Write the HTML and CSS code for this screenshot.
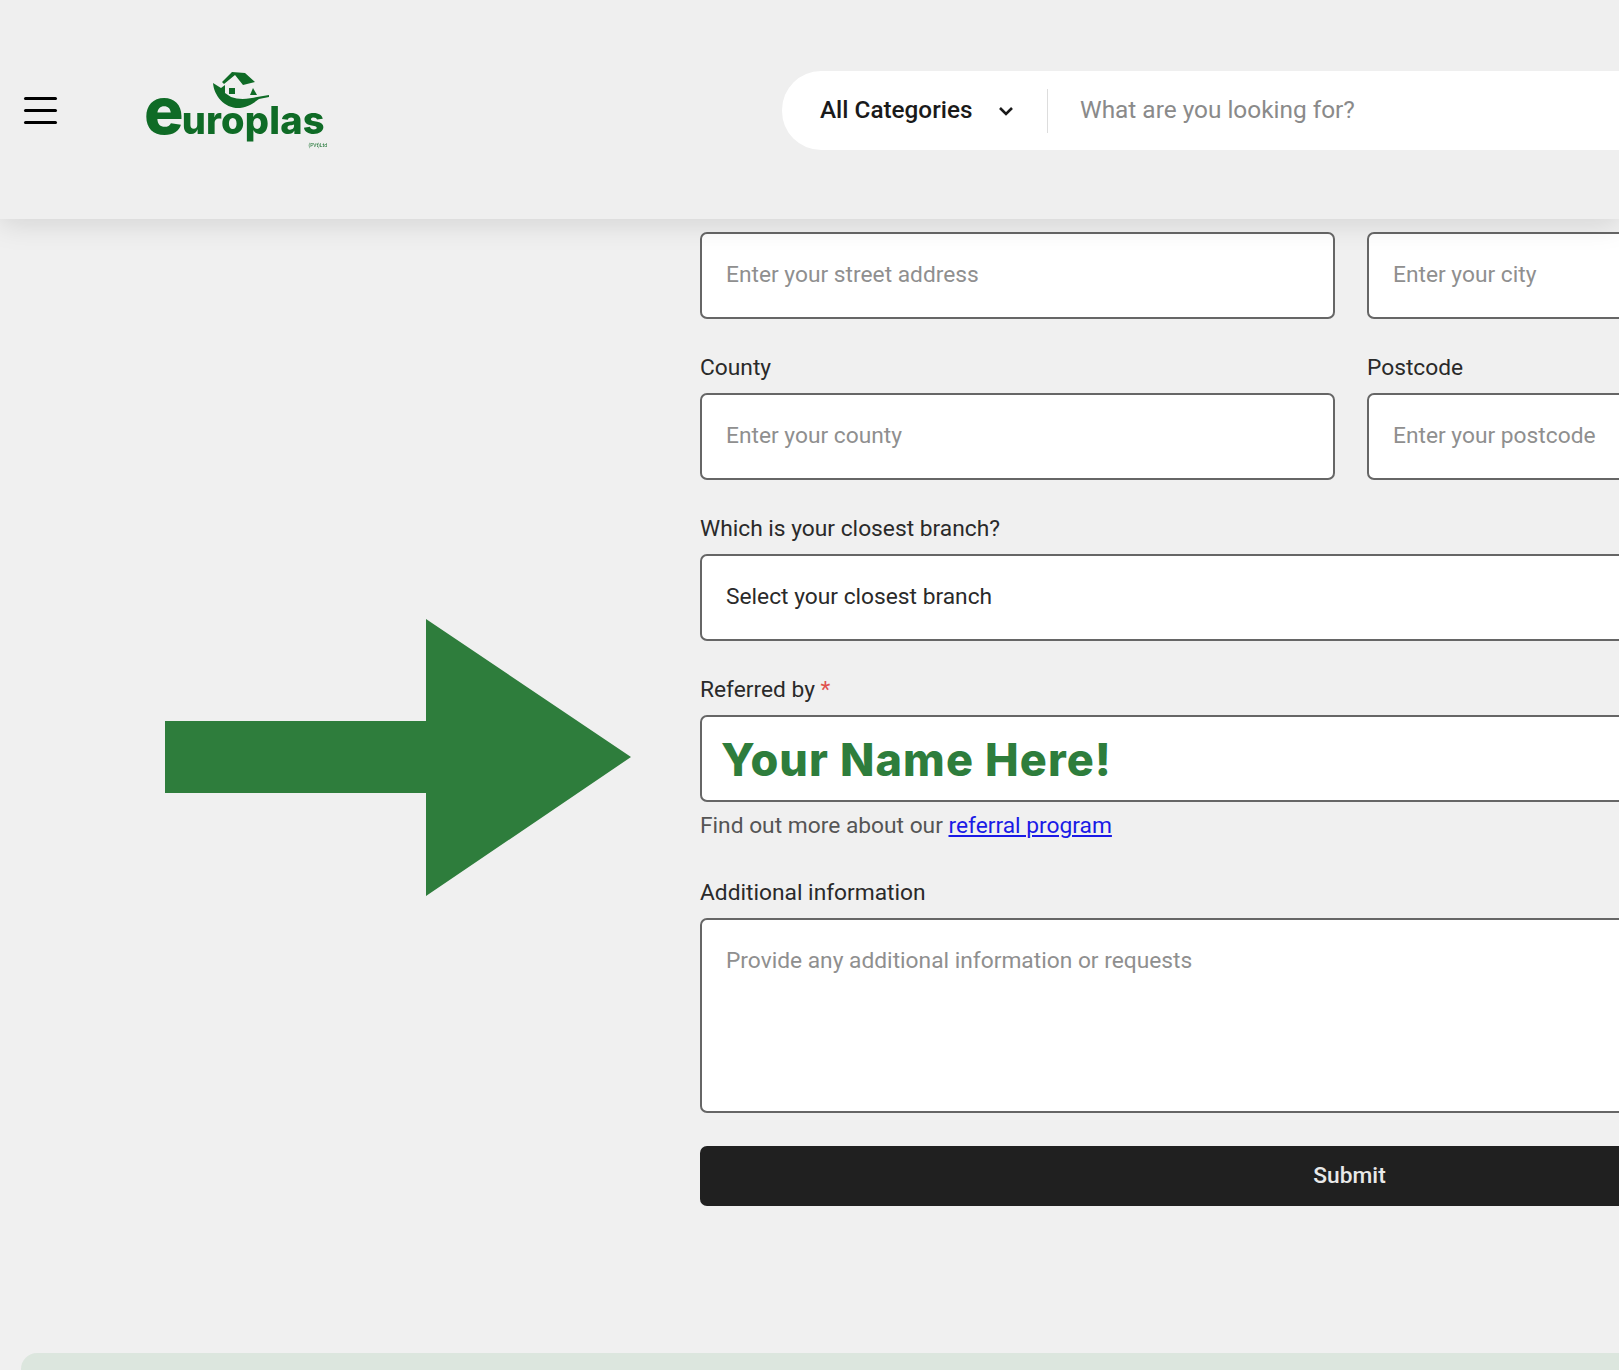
FILE: index.html
```html
<!DOCTYPE html>
<html lang="en">
<head>
  <meta charset="UTF-8">
  <meta name="viewport" content="width=device-width, initial-scale=1.0">
  <title>Europlas - Referral</title>
  <link rel="stylesheet" href="styles.css">
</head>
<body>

<header class="site-header">
  <button class="menu-btn" aria-label="Menu">
    <span></span><span></span><span></span>
  </button>
  <a href="#" class="logo">
    <svg class="logo-mark" viewBox="0 0 56 37" width="56" height="37">
      <!-- leaf -->
      <path d="M0 11 C1 24 12 37 27 36 C36 35 42 30 46 27 L56 25 L56 23 L44 25 C36 27 26 28 18 25 L12 21 L12 13 L8 16 Z" fill="#0f6b26"/>
      <!-- roof -->
      <path d="M9 10 L19 0 L32 1 L42 10 L30 13 L22 3 L11 12 Z" fill="#0f6b26"/>
      <!-- window and small gable -->
      <rect x="16" y="16" width="6" height="6" fill="#0f6b26"/>
      <path d="M37 23 L40 16 L44 23 Z" fill="#0f6b26"/>
    </svg>
    <span class="logo-word"><span class="logo-e">e</span>uroplas</span>
    <span class="logo-small">(PVt)Ltd</span>
  </a>
  <div class="search-bar">
    <div class="category-pick">
      <span>All Categories</span>
      <svg viewBox="0 0 16 10" width="16" height="10"><path d="M2 2 L8 8 L14 2" fill="none" stroke="#1a1a1a" stroke-width="2.6"/></svg>
    </div>
    <input class="search-input" type="text" placeholder="What are you looking for?">
  </div>
</header>

<main class="page">
  <!-- big arrow pointing at the referred by box -->
  <svg class="arrow" viewBox="0 0 466 277" width="466" height="277">
    <polygon points="0,102 261,102 261,0 466,138 261,277 261,174 0,174" fill="#2e7d3c"/>
  </svg>

  <form class="signup-form">
    <div class="row">
      <div class="field">
        <input type="text" placeholder="Enter your street address">
      </div>
      <div class="field">
        <input type="text" placeholder="Enter your city">
      </div>
    </div>
    <div class="row">
      <div class="field">
        <label>County</label>
        <input type="text" placeholder="Enter your county">
      </div>
      <div class="field">
        <label>Postcode</label>
        <input type="text" placeholder="Enter your postcode">
      </div>
    </div>
    <div class="field">
      <label>Which is your closest branch?</label>
      <select>
        <option>Select your closest branch</option>
      </select>
    </div>
    <div class="field">
      <label>Referred by <span class="required">*</span></label>
      <div class="name-box">Your Name Here!</div>
      <p class="hint">Find out more about our <a href="#">referral program</a></p>
    </div>
    <div class="field field-info">
      <label>Additional information</label>
      <textarea placeholder="Provide any additional information or requests"></textarea>
    </div>
    <button type="button" class="submit-btn">Submit</button>
  </form>

  <div class="footer-band"></div>
</main>

</body>
</html>
```

FILE: styles.css
```css
* {
    box-sizing: border-box;
}
html, body {
    overflow-x: hidden;
}
body {
    font-family: Roboto, Arial, sans-serif;
    margin: 0;
    padding: 0;
    background-color: #f0f0f0;
    color: #2a2a2a;
    font-size: 22.75px;
}
.site-header {
    position: relative;
    z-index: 2;
    display: flex;
    align-items: flex-start;
    height: 219px;
    width: 1619px;
    background: #efefef;
    box-shadow: 0 4px 28px rgba(0, 0, 0, 0.13);
}
.menu-btn {
    display: flex;
    flex-direction: column;
    flex-shrink: 0;
    gap: 9px;
    width: 33px;
    margin: 97px 0 0 24px;
    padding: 0;
    border: 0;
    background: none;
}
.menu-btn span {
    display: block;
    height: 3px;
    background: #000;
    border-radius: 2px;
}
.logo {
    position: relative;
    display: block;
    flex-shrink: 0;
    width: 182px;
    height: 80px;
    margin: 68px 0 0 89px;
    text-decoration: none;
    color: #0f6b26;
    filter: blur(0.4px);
}
.logo-mark {
    position: absolute;
    left: 67px;
    top: 4px;
}
.logo-word {
    position: absolute;
    left: -2px;
    top: 15px;
    font-family: Inter, "Open Sans", sans-serif;
    font-weight: 800;
    font-size: 38px;
    line-height: 54px;
    height: 54px;
    letter-spacing: 0.2px;
    white-space: nowrap;
}
.logo-e {
    font-size: 66px;
    line-height: 54px;
    letter-spacing: -2px;
}
.logo-small {
    position: absolute;
    right: 1px;
    top: 74px;
    font-size: 5px;
    line-height: 6px;
}
.search-bar {
    display: flex;
    align-items: center;
    width: 900px;
    height: 79px;
    margin: 71px 0 0 454px;
    flex-shrink: 0;
    background: #fff;
    border-radius: 39px 0 0 39px;
}
.category-pick {
    display: flex;
    align-items: center;
    justify-content: space-between;
    width: 266px;
    height: 44px;
    padding: 0 33px 0 38px;
    border-right: 1px solid #ddd;
    font-size: 24.3px;
    font-weight: 500;
    color: #1a1a1a;
}
.category-pick span {
    margin-bottom: 2px;
}
.search-input {
    flex: 1;
    height: 44px;
    padding: 0 0 2px 32px;
    border: 0;
    outline: 0;
    background: none;
    font-family: inherit;
    font-size: 24.4px;
}
.search-input::placeholder {
    color: #8a8a8a;
    opacity: 1;
}
.page {
    position: relative;
    width: 1619px;
    padding-top: 13px;
}
.arrow {
    position: absolute;
    left: 165px;
    top: 400px;
}
.signup-form {
    width: 1299px;
    margin-left: 700px;
}
.row {
    display: grid;
    grid-template-columns: 634.5px 632px;
    gap: 32.5px;
}
.field {
    margin-bottom: 36.5px;
}
label {
    display: block;
    height: 26px;
    line-height: 26px;
    margin-bottom: 12px;
    color: #2a2a2a;
}
.required {
    color: #e0524f;
}
input, select, .name-box, textarea {
    display: block;
    width: 100%;
    font-family: inherit;
    font-size: 22.75px;
    color: #2a2a2a;
    background: #fff;
    border: 2px solid #666;
    border-radius: 7px;
    outline: 0;
}
.field input, select {
    height: 86.5px;
    padding: 0 24px 1px;
}
.name-box {
    height: 86.5px;
    padding: 0 19px;
    line-height: 85px;
    font-family: Inter, Lato, sans-serif;
    font-size: 45px;
    font-weight: 800;
    letter-spacing: 1.1px;
    color: #2e7d3c;
}
input::placeholder, textarea::placeholder {
    color: #8f8f8f;
    opacity: 1;
}
select {
    appearance: none;
}
.hint {
    margin: 12.5px 0 0;
    height: 24px;
    line-height: 24px;
    color: #555;
}
.hint a {
    color: #1a1ae6;
}
.field-info {
    margin-top: 42px;
    margin-bottom: 33px;
}
.field-info textarea {
    height: 195px;
    padding: 27px 24px;
    resize: none;
}
.submit-btn {
    display: block;
    width: 100%;
    height: 60px;
    padding: 0 0 2px;
    border: 0;
    border-radius: 7px;
    background: #202020;
    color: #e8e8e8;
    font-family: inherit;
    font-size: 22.75px;
    font-weight: 500;
}
.footer-band {
    width: 1700px;
    height: 60px;
    margin: 147px 0 0 21px;
    background: #dce6de;
    border-radius: 16px 0 0 0;
}
```
